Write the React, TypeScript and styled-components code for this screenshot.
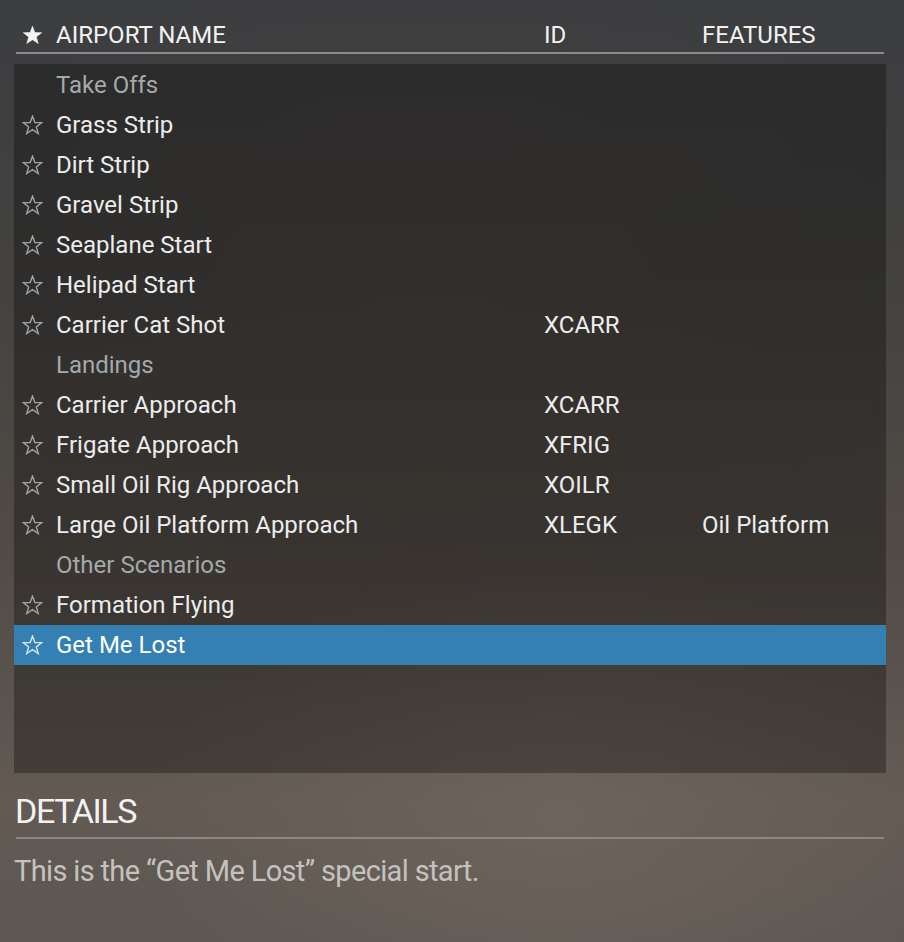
import React from "react";
import styled, { createGlobalStyle } from "styled-components";

const GlobalStyle = createGlobalStyle`
  html, body {
    margin: 0;
    padding: 0;
  }
  body {
    font-family: Roboto, "Liberation Sans", sans-serif;
    background-color: #4e4b48;
    background-image:
      radial-gradient(ellipse 420px 260px at 560px 820px, rgba(120, 110, 100, 0.5), rgba(120, 110, 100, 0) 100%),
      radial-gradient(ellipse 500px 400px at 430px 330px, rgba(80, 70, 62, 0.35), rgba(80, 70, 62, 0) 100%),
      linear-gradient(180deg, #3c3d40 0%, #434240 30%, #524c47 60%, #625a53 85%, #5e5752 100%);
    min-height: 942px;
  }
`;

const Page = styled.div`
  box-sizing: border-box;
  min-height: 942px;
  padding: 18px 18px 0 14px;
  color: #ececec;
`;

const columns = "42px 488px 158px 1fr";

const HeaderRow = styled.div`
  display: grid;
  grid-template-columns: 40px 488px 158px 1fr;
  align-items: center;
  margin: 0 2px;
  height: 34px;
  line-height: 34px;
  font-size: 24px;
  border-bottom: 2px solid #8a8a8b;
  color: #f2f2f2;
`;

const Panel = styled.div`
  margin-top: 10px;
  height: 709px;
  background: rgba(0, 0, 0, 0.3);
  padding-top: 1px;
  box-sizing: border-box;
`;

const Row = styled.div<{ $selected?: boolean }>`
  display: grid;
  grid-template-columns: ${columns};
  align-items: center;
  height: 40px;
  line-height: 40px;
  font-size: 24px;
  color: ${p => (p.$selected ? "#ffffff" : "#ececec")};
  background: ${p => (p.$selected ? "#3580b2" : "transparent")};
  white-space: nowrap;
`;

const Category = styled.span`
  grid-column: 2;
  color: #a4a9ab;
`;

const StarCell = styled.span<{ $inset?: number }>`
  display: flex;
  align-items: center;
  padding-left: ${p => p.$inset ?? 8}px;
`;

const DetailsTitle = styled.h2`
  margin: 18px 2px 0 2px;
  text-indent: -1px;
  font-weight: 400;
  font-size: 34px;
  line-height: 40px;
  letter-spacing: -1.4px;
  padding-bottom: 6px;
  border-bottom: 2px solid #8c8783;
  color: #f2f2f2;
`;

const DetailsText = styled.p`
  margin: 12px 0 0 0;
  font-size: 29px;
  line-height: 40px;
  letter-spacing: -0.65px;
  color: #c4c2bf;
  white-space: nowrap;
`;

const StarIcon = ({ filled, color }: { filled?: boolean; color: string }) => (
  <svg width="21" height="20" viewBox="0 0 24 23">
    <path
      d="M12 1.2 L14.7 8.6 L22.6 8.8 L16.4 13.7 L18.6 21.3 L12 16.9 L5.4 21.3 L7.6 13.7 L1.4 8.8 L9.3 8.6 Z"
      fill={filled ? color : "none"}
      stroke={color}
      strokeWidth={filled ? 0.6 : 1.6}
      strokeLinejoin="miter"
    />
  </svg>
);

type Item =
  | { kind: "category"; name: string }
  | { kind: "airport"; name: string; id?: string; features?: string; selected?: boolean };

const items: Item[] = [
  { kind: "category", name: "Take Offs" },
  { kind: "airport", name: "Grass Strip" },
  { kind: "airport", name: "Dirt Strip" },
  { kind: "airport", name: "Gravel Strip" },
  { kind: "airport", name: "Seaplane Start" },
  { kind: "airport", name: "Helipad Start" },
  { kind: "airport", name: "Carrier Cat Shot", id: "XCARR" },
  { kind: "category", name: "Landings" },
  { kind: "airport", name: "Carrier Approach", id: "XCARR" },
  { kind: "airport", name: "Frigate Approach", id: "XFRIG" },
  { kind: "airport", name: "Small Oil Rig Approach", id: "XOILR" },
  { kind: "airport", name: "Large Oil Platform Approach", id: "XLEGK", features: "Oil Platform" },
  { kind: "category", name: "Other Scenarios" },
  { kind: "airport", name: "Formation Flying" },
  { kind: "airport", name: "Get Me Lost", selected: true },
];

export default function App() {
  return (
    <>
      <GlobalStyle />
      <Page>
        <HeaderRow>
          <StarCell $inset={6}>
            <StarIcon filled color="#f4f4f4" />
          </StarCell>
          <span>AIRPORT NAME</span>
          <span>ID</span>
          <span>FEATURES</span>
        </HeaderRow>
        <Panel>
          {items.map((item, i) =>
            item.kind === "category" ? (
              <Row key={i}>
                <Category>{item.name}</Category>
              </Row>
            ) : (
              <Row key={i} $selected={item.selected}>
                <StarCell>
                  <StarIcon color={item.selected ? "#d8e6f0" : "#9ea2a4"} />
                </StarCell>
                <span>{item.name}</span>
                <span>{item.id}</span>
                <span>{item.features}</span>
              </Row>
            )
          )}
        </Panel>
        <div>
          <DetailsTitle>DETAILS</DetailsTitle>
          <DetailsText>This is the “Get Me Lost” special start.</DetailsText>
        </div>
      </Page>
    </>
  );
}
